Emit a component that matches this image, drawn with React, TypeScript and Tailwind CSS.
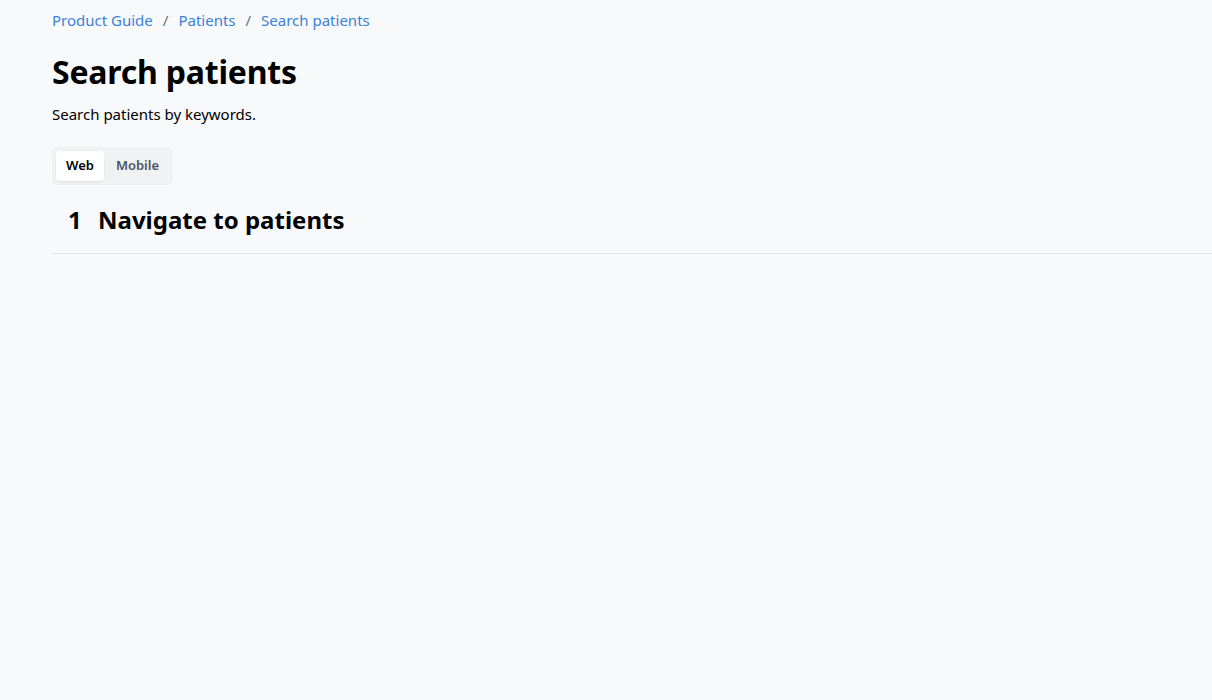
import React from "react";

export default function App() {
  return (
    <div className="min-h-[700px] w-full bg-[#f8f9fb] text-black" style={{ fontFamily: '"Noto Sans", "Open Sans", sans-serif' }}>
      <div className="pl-[52px]">
        <nav className="flex items-center pt-[9px] text-[15px] leading-[22px] text-[#3b82d6]">
          <span>Product Guide</span>
          <span className="mx-[10px] text-[#6b7280]">/</span>
          <span>Patients</span>
          <span className="mx-[10px] text-[#6b7280]">/</span>
          <span>Search patients</span>
        </nav>
        <h1 className="mt-[21px] text-[32px] font-bold leading-[40px] tracking-[-0.2px]">Search patients</h1>
        <p className="mt-[11px] text-[15px] leading-[22px]">Search patients by keywords.</p>
        <div className="mt-[22px] inline-flex items-center gap-[2px] rounded-[5px] bg-[#f0f1f3] p-[4px]">
          <button className="h-[30px] rounded-[4px] bg-white px-[10px] text-[13px] font-semibold text-black shadow-[0_1px_2px_rgba(0,0,0,0.08)]">Web</button>
          <button className="h-[30px] rounded-[4px] px-[10px] text-[13px] font-semibold text-[#4b5563]">Mobile</button>
        </div>
        <div className="mt-[11px] flex h-[58px] items-center border-b border-[#e2e4e8] pl-[16px] pb-[10px]">
          <span className="w-[30px] text-[24px] font-bold leading-[30px]">1</span>
          <h2 className="text-[24px] font-bold leading-[30px]">Navigate to patients</h2>
        </div>
      </div>
    </div>
  );
}
